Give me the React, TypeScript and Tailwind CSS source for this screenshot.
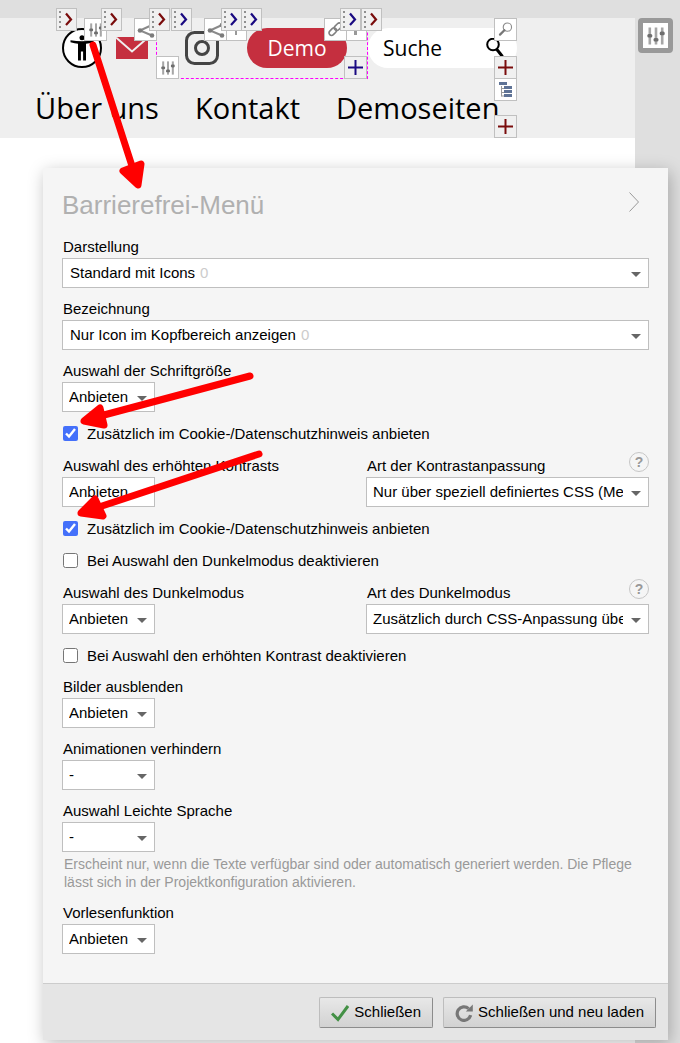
import { useId, useState } from 'react';
import type { ReactNode } from 'react';

type Tone = 'red' | 'blue';

const TONES: Record<Tone, string> = { red: '#7a0c0c', blue: '#1a0a82' };

/* Editing handles that float above the page header */
const HANDLES: { pos: string; tone: Tone }[] = [
  { pos: 'left-[56px]', tone: 'red' },
  { pos: 'left-[101px]', tone: 'red' },
  { pos: 'left-[149px]', tone: 'red' },
  { pos: 'left-[171px]', tone: 'blue' },
  { pos: 'left-[221px]', tone: 'blue' },
  { pos: 'left-[241px]', tone: 'blue' },
  { pos: 'left-[340px]', tone: 'blue' },
  { pos: 'left-[361px]', tone: 'red' },
];

function SlidersIcon({ className }: { className: string }) {
  return (
    <svg viewBox="0 0 18 18" className={className} aria-hidden="true">
      <g fill="#a6a6a6">
        <rect x="1.500" y="0.500" width="2.600" height="17" />
        <rect x="7.700" y="0.500" width="2.600" height="17" />
        <rect x="13.900" y="0.500" width="2.600" height="17" />
      </g>
      <g fill="#6e6e6e">
        <rect x="0.300" y="7" width="5" height="3.600" rx="1.500" />
        <rect x="6.500" y="11" width="5" height="3.600" rx="1.500" />
        <rect x="12.700" y="4.600" width="5" height="3.600" rx="1.500" />
      </g>
    </svg>
  );
}

function ShareIcon() {
  return (
    <svg viewBox="0 0 18 18" className="size-[18px]" aria-hidden="true">
      <path d="M15 4 3 9.5 15 14.5" fill="none" stroke="#8a8a8a" strokeWidth="2" />
      <circle cx="15" cy="4" r="2.3" fill="#7c7c7c" />
      <circle cx="3" cy="9.5" r="2.3" fill="#7c7c7c" />
      <circle cx="15" cy="14.5" r="2.3" fill="#7c7c7c" />
    </svg>
  );
}

function LinkIcon() {
  return (
    <svg viewBox="0 0 18 18" className="size-[17px]" fill="none" stroke="#808080" strokeWidth="1.7" aria-hidden="true">
      <rect x="1.6" y="8.6" width="9" height="5.4" rx="2.7" transform="rotate(-45 6.1 11.3)" />
      <rect x="7.2" y="3.4" width="9" height="5.4" rx="2.7" transform="rotate(-45 11.7 6.1)" />
    </svg>
  );
}

function LoupeIcon() {
  return (
    <svg viewBox="0 0 18 18" className="size-[17px]" fill="none" aria-hidden="true">
      <circle cx="11" cy="6.5" r="4.4" stroke="#8c8c8c" strokeWidth="1.2" />
      <path d="M7.8 9.8 3.2 14.4" stroke="#777777" strokeWidth="2.4" strokeLinecap="round" />
    </svg>
  );
}

function TreeIcon() {
  return (
    <svg viewBox="0 0 18 18" className="size-[18px]" aria-hidden="true">
      <path d="M4.500 5v10.500M4.500 7.500H8M4.500 11.500H8M4.500 15H8" fill="none" stroke="#999999" />
      <g fill="#5f7396">
        <rect x="2" y="1" width="8" height="3" />
        <rect x="7" y="5" width="8" height="3" />
        <rect x="7" y="9" width="8" height="3" />
        <rect x="7" y="13" width="8" height="3" />
      </g>
    </svg>
  );
}

function PlusIcon({ tone }: { tone: Tone }) {
  return (
    <svg viewBox="0 0 17 17" className="size-[17px]" aria-hidden="true">
      <path d="M8.500 1v15M1 8.500h15" fill="none" stroke={TONES[tone]} strokeWidth="2" />
    </svg>
  );
}

function Handle({ pos, tone }: { pos: string; tone: Tone }) {
  return (
    <button
      type="button"
      aria-label="Verschieben"
      className={`absolute top-2 flex h-[23px] w-[21px] items-center border border-[#c0c0c0] bg-[#f0f0f0] ${pos}`}
    >
      <svg viewBox="0 0 19 21" className="h-[21px] w-[19px]" aria-hidden="true">
        <g fill="#8f8f8f">
          <rect x="2" y="2" width="2" height="2" />
          <rect x="2" y="7" width="2" height="2" />
          <rect x="2" y="12" width="2" height="2" />
          <rect x="2" y="17" width="2" height="2" />
        </g>
        <path d="M9 4.500 14 10.500 9 16" fill="none" stroke={TONES[tone]} strokeWidth="2.200" />
      </svg>
    </button>
  );
}

function Badge({ pos, label, muted, children }: { pos: string; label: string; muted?: boolean; children: ReactNode }) {
  return (
    <button
      type="button"
      aria-label={label}
      className={`absolute flex size-[23px] items-center justify-center border border-[#c0c0c0] ${
        muted ? 'bg-[#f0f0f0]' : 'bg-white'
      } ${pos}`}
    >
      {children}
    </button>
  );
}

function EditorOverlay() {
  return (
    <>
      <Badge pos="left-[84px] top-[18px]" label="Einstellungen"><SlidersIcon className="size-[14px]" /></Badge>
      <Badge pos="left-[134px] top-[18px]" label="Teilen"><ShareIcon /></Badge>
      <Badge pos="left-[224px] top-[18px]" label="Teilen"><span className="h-[10px] w-[2px] bg-[#999999]" /></Badge>
      <Badge pos="left-[204px] top-[18px]" label="Teilen"><ShareIcon /></Badge>
      <Badge pos="left-[344px] top-[18px]" label="Text"><span className="h-[10px] w-[3px] bg-[#999999]" /></Badge>
      <Badge pos="left-[324px] top-[18px]" label="Link"><LinkIcon /></Badge>
      <Badge pos="left-[156px] top-[56px]" label="Einstellungen"><SlidersIcon className="size-[14px]" /></Badge>
      <Badge pos="left-[344px] top-[56px]" label="Hinzufügen" muted><PlusIcon tone="blue" /></Badge>
      <Badge pos="left-[494px] top-[18px]" label="Suche"><LoupeIcon /></Badge>
      <Badge pos="left-[494px] top-[56px]" label="Hinzufügen" muted><PlusIcon tone="red" /></Badge>
      <Badge pos="left-[494px] top-[78px]" label="Struktur"><TreeIcon /></Badge>
      <Badge pos="left-[494px] top-[115px]" label="Hinzufügen" muted><PlusIcon tone="red" /></Badge>
      {HANDLES.map((h) => (
        <Handle key={h.pos} pos={h.pos} tone={h.tone} />
      ))}
    </>
  );
}

function SiteHeader() {
  return (
    <header className="h-[120px] bg-[#efefef] font-['Open_Sans','Noto_Sans',sans-serif] text-black">
      <div className="flex h-[61px] items-start pl-[62px]">
        <a href="#barrierefrei" aria-label="Barrierefrei" className="mt-[10px]">
          <svg viewBox="0 0 40 40" className="size-10">
            <circle cx="20" cy="20" r="19" fill="#ffffff" stroke="#000000" strokeWidth="2" />
            <circle cx="20" cy="9.800" r="2.500" />
            <path d="M8.500 12.200Q20 14.500 31.500 12.200V14.300Q27 15.400 24 15.800V32.500H21.100V23.500H18.900V32.500H16V15.800Q13 15.400 8.500 14.300Z" />
          </svg>
        </a>
        <a href="#mail" aria-label="E-Mail" className="mt-[19px] ml-[14px]">
          <svg viewBox="0 0 32 22" className="h-[22px] w-8">
            <rect width="32" height="22" fill="#c52f3f" />
            <path d="M0 0.500 16 14.500 32 0.500" fill="none" stroke="#efefef" strokeWidth="2" />
          </svg>
        </a>
        <div className="ml-2 flex h-[61px] w-[212px] items-start gap-7 border-x border-b border-dashed border-[#ff00ff] pt-[10px] pl-7">
          <a href="#instagram" aria-label="Instagram" className="mt-[3px]">
            <svg viewBox="0 0 34 34" className="size-[34px]" fill="none" stroke="#444444">
              <rect x="1.500" y="1.500" width="31" height="31" rx="8" strokeWidth="3" />
              <circle cx="17" cy="17" r="6.500" strokeWidth="3" />
              <circle cx="26" cy="8" r="1" fill="#444444" />
            </svg>
          </a>
          <a href="#demo" className="flex h-10 w-[100px] items-center justify-center rounded-full bg-[#c52f3f] pt-0.5 text-[21px] text-white">
            Demo
          </a>
        </div>
        <label className="mt-[10px] flex h-10 w-[149px] items-center rounded-full bg-white pr-3 pl-[15px]">
          <input
            type="search"
            aria-label="Suche"
            placeholder="Suche"
            className="w-0 flex-1 pt-0.5 text-[21px] outline-none placeholder:text-black placeholder:opacity-100"
          />
          <svg viewBox="0 0 20 20" className="size-5" fill="none" stroke="#000000" aria-hidden="true">
            <circle cx="8" cy="6.500" r="5.800" strokeWidth="2" />
            <path d="M11.500 11 17.500 18.500" strokeWidth="3" />
          </svg>
        </label>
      </div>
      <nav className="flex h-[59px] items-center gap-9 pb-0.5 pl-[35px] text-[29px]">
        <a href="#ueber-uns">Über uns</a>
        <a href="#kontakt">Kontakt</a>
        <a href="#demoseiten">Demoseiten</a>
      </nav>
    </header>
  );
}

interface FieldProps {
  label: string;
  value: string;
  count?: string;
  wide?: boolean;
  help?: boolean;
}

function SelectField({ label, value, count, wide, help }: FieldProps) {
  const id = useId();
  return (
    <div>
      <div className="flex items-end justify-between px-px">
        <label htmlFor={id} className="mb-0.5 leading-[18px]">{label}</label>
        {help && (
          <button
            type="button"
            aria-label={`Hilfe zu ${label}`}
            className="-mt-2 -mr-px mb-[5px] flex size-5 items-center justify-center rounded-full border border-[#c6c6c6] text-[14px] leading-none font-bold text-[#999999]"
          >
            ?
          </button>
        )}
      </div>
      <div className={`relative ${wide ? 'w-full' : 'w-[93px]'}`}>
        <select
          id={id}
          defaultValue={value}
          className={`block h-[30px] w-full appearance-none border border-[#bfbfbf] bg-white pr-[25px] text-black ${
            count ? 'pl-[7px]' : 'pl-[6px]'
          }`}
        >
          <option>{value}</option>
        </select>
        {count && (
          <span className="pointer-events-none absolute inset-y-0 left-2 flex items-center gap-[5px]">
            <span aria-hidden="true" className="invisible">{value}</span>
            <span className="text-[#cccccc]">{count}</span>
          </span>
        )}
        <svg viewBox="0 0 10 5" className="pointer-events-none absolute top-[14px] right-2 h-[5px] w-[10px]" aria-hidden="true">
          <path d="M0 0h10L5 5z" fill="#666666" />
        </svg>
      </div>
    </div>
  );
}

function CheckField({ label, initial = false }: { label: string; initial?: boolean }) {
  const [checked, setChecked] = useState(initial);
  return (
    <label className="flex h-5 items-center gap-[9px] pb-px pl-px leading-[19px]">
      <input
        type="checkbox"
        checked={checked}
        onChange={(e) => setChecked(e.target.checked)}
        className="size-[15px] accent-[#4470fa]"
      />
      {label}
    </label>
  );
}

const buttonClass =
  'flex h-[31px] items-center gap-[5px] rounded-xs border border-[#bdbdbd] border-r-[#8c8c8c] border-b-[#8c8c8c] bg-linear-to-b from-[#e8e8e8] to-[#d2d2d2] px-[11px]';

function AccessibilityPanel() {
  return (
    <section className="relative z-10 mt-[30px] -mr-[33px] ml-[43px] bg-[#f5f5f5] text-[15px] text-black shadow-[2px_4px_16px_rgba(0,0,0,0.26)]">
      <form className="flex flex-col gap-3 px-[19px] pt-[21px] pb-[29px]" onSubmit={(e) => e.preventDefault()}>
        <div className="mb-[5px] flex items-start justify-between">
          <h1 className="text-[26px] leading-8 text-[#b0b0b0]">Barrierefrei-Menü</h1>
          <button type="button" aria-label="Menü einklappen" className="mt-[3px] mr-[10px]">
            <svg viewBox="0 0 10 20" className="h-5 w-[10px]" fill="none" stroke="#999999">
              <path d="M0.500 0.500 9.500 10 0.500 19.500" />
            </svg>
          </button>
        </div>

        <SelectField label="Darstellung" value="Standard mit Icons" count="0" wide />
        <SelectField label="Bezeichnung" value="Nur Icon im Kopfbereich anzeigen" count="0" wide />
        <SelectField label="Auswahl der Schriftgröße" value="Anbieten" />
        <CheckField label="Zusätzlich im Cookie-/Datenschutzhinweis anbieten" initial />

        <div className="grid grid-cols-2 gap-[21px] pt-px">
          <SelectField label="Auswahl des erhöhten Kontrasts" value="Anbieten" />
          <SelectField label="Art der Kontrastanpassung" value="Nur über speziell definiertes CSS (Media Queries)" wide help />
        </div>
        <CheckField label="Zusätzlich im Cookie-/Datenschutzhinweis anbieten" initial />
        <CheckField label="Bei Auswahl den Dunkelmodus deaktivieren" />

        <div className="grid grid-cols-2 gap-[21px] pt-px">
          <SelectField label="Auswahl des Dunkelmodus" value="Anbieten" />
          <SelectField label="Art des Dunkelmodus" value="Zusätzlich durch CSS-Anpassung über Filter" wide help />
        </div>
        <CheckField label="Bei Auswahl den erhöhten Kontrast deaktivieren" />

        <SelectField label="Bilder ausblenden" value="Anbieten" />
        <SelectField label="Animationen verhindern" value="-" />
        <div>
          <SelectField label="Auswahl Leichte Sprache" value="-" />
          <p className="px-0.5 pt-[3px] pb-px text-[14px] leading-[18px] text-[#999999]">
            Erscheint nur, wenn die Texte verfügbar sind oder automatisch generiert werden. Die Pflege lässt sich in der
            Projektkonfiguration aktivieren.
          </p>
        </div>
        <SelectField label="Vorlesenfunktion" value="Anbieten" />
      </form>

      <footer className="flex justify-end gap-[10px] border-t border-[#cccccc] bg-[#e5e5e5] px-3 pt-[13px] pb-3">
        <button type="button" className={buttonClass}>
          <svg viewBox="0 0 18 18" className="size-[18px]" fill="none" aria-hidden="true">
            <path d="M1 9.500 7 15.500 17 2" stroke="#439045" strokeWidth="3" />
          </svg>
          Schließen
        </button>
        <button type="button" className={buttonClass}>
          <svg viewBox="0 0 18 18" className="size-[18px]" fill="none" aria-hidden="true">
            <path d="M13.600 4.600A6.800 6.800 0 1 0 15.600 11.200" stroke="#777777" strokeWidth="3.200" />
            <path d="M17.800 0.500V7.500H10.800Z" fill="#777777" />
          </svg>
          Schließen und neu laden
        </button>
      </footer>
    </section>
  );
}

/* Red marker arrows drawn over everything */
function MarkerArrows() {
  return (
    <svg
      viewBox="0 0 680 540"
      className="pointer-events-none absolute top-0 left-0 z-20 h-[540px] w-[680px]"
      fill="#ff0000"
      stroke="#ff0000"
      strokeWidth="7"
      strokeLinecap="round"
      strokeLinejoin="round"
      aria-hidden="true"
    >
      <path d="M93 45 132 166" />
      <path d="M250 376 104 415" />
      <path d="M259 454 102 506" />
      <path d="M123 171 141 164 138 185Z" />
      <path d="M84 421 100 408 104 425Z" />
      <path d="M81 513 95 499 103 516Z" />
    </svg>
  );
}

export default function App() {
  return (
    <div className="relative flex min-h-screen items-stretch overflow-hidden bg-[#dfdfdf] pt-[18px] font-['Liberation_Sans',Arial,sans-serif]">
      <main className="min-w-0 flex-1 bg-white pb-[3px]">
        <SiteHeader />
        <AccessibilityPanel />
      </main>
      <aside className="w-[45px] shrink-0 pl-[3px]">
        <button
          type="button"
          aria-label="Einstellungen"
          className="flex size-[35px] items-center justify-center rounded-sm border-5 border-[#999999] bg-white"
        >
          <SlidersIcon className="size-[18px]" />
        </button>
      </aside>
      <EditorOverlay />
      <MarkerArrows />
    </div>
  );
}
